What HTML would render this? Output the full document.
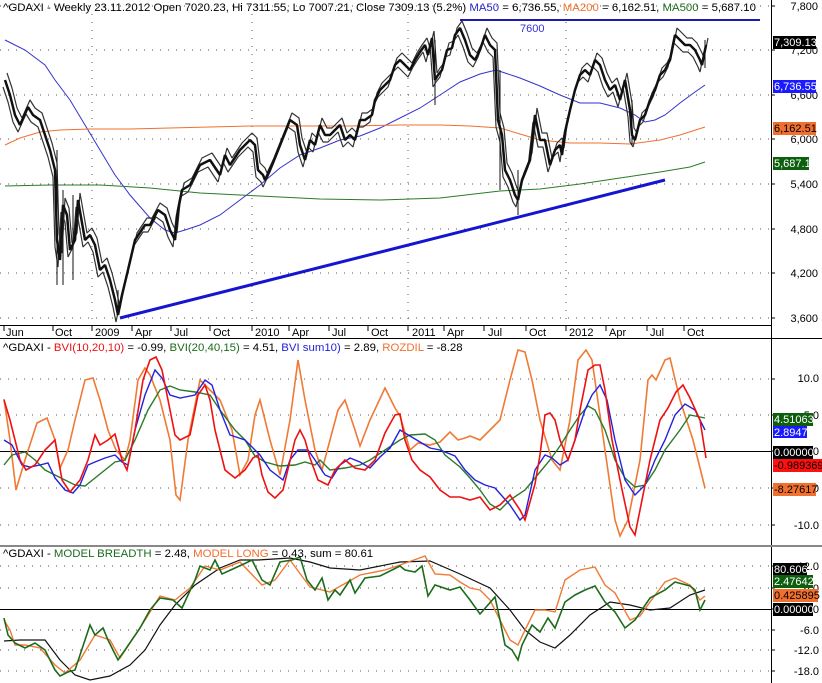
<!DOCTYPE html>
<html><head><meta charset="utf-8"><style>
html,body{margin:0;padding:0;background:#fff;}
svg{display:block;font-family:"Liberation Sans",Arial,sans-serif;font-size:11px;}
.hd{font-size:11.4px;}
</style></head><body>
<svg width="822" height="683" viewBox="0 0 822 683" xmlns="http://www.w3.org/2000/svg">
<rect width="822" height="683" fill="#fff"/>
<g stroke="#555" stroke-width="1" stroke-dasharray="1,7">
<line x1="0" y1="6" x2="771" y2="6"/><line x1="0" y1="50" x2="771" y2="50"/><line x1="0" y1="95" x2="771" y2="95"/><line x1="0" y1="139" x2="771" y2="139"/><line x1="0" y1="184" x2="771" y2="184"/><line x1="0" y1="229" x2="771" y2="229"/><line x1="0" y1="273" x2="771" y2="273"/><line x1="0" y1="318" x2="771" y2="318"/>
<line x1="0" y1="379" x2="771" y2="379"/><line x1="0" y1="415" x2="771" y2="415"/><line x1="0" y1="488" x2="771" y2="488"/><line x1="0" y1="525" x2="771" y2="525"/>
<line x1="0" y1="566" x2="771" y2="566"/><line x1="0" y1="588" x2="771" y2="588"/><line x1="0" y1="630" x2="771" y2="630"/><line x1="0" y1="650" x2="771" y2="650"/><line x1="0" y1="671" x2="771" y2="671"/>
<line x1="92" y1="14" x2="92" y2="325"/><line x1="252" y1="14" x2="252" y2="325"/><line x1="408" y1="14" x2="408" y2="325"/><line x1="566" y1="14" x2="566" y2="325"/>
</g>
<g stroke="#000" stroke-width="1">
<line x1="771" y1="6" x2="775" y2="6"/><line x1="771" y1="50" x2="775" y2="50"/><line x1="771" y1="95" x2="775" y2="95"/><line x1="771" y1="139" x2="775" y2="139"/><line x1="771" y1="184" x2="775" y2="184"/><line x1="771" y1="229" x2="775" y2="229"/><line x1="771" y1="273" x2="775" y2="273"/><line x1="771" y1="318" x2="775" y2="318"/>
</g>
<line x1="771.5" y1="0" x2="771.5" y2="683" stroke="#000"/>
<line x1="0" y1="325.5" x2="771" y2="325.5" stroke="#000"/>
<line x1="0" y1="338.5" x2="822" y2="338.5" stroke="#000"/>
<line x1="0" y1="546" x2="822" y2="546" stroke="#888" stroke-width="2"/>
<line x1="0" y1="451.5" x2="771" y2="451.5" stroke="#000"/>
<line x1="0" y1="609.5" x2="771" y2="609.5" stroke="#000"/>
<g fill="#000">
<text x="6" y="336">Jun</text><text x="55" y="336">Oct</text><text x="95" y="336">2009</text><text x="135" y="336">Apr</text><text x="174" y="336">Jul</text><text x="213" y="336">Oct</text><text x="255" y="336">2010</text><text x="292" y="336">Apr</text><text x="332" y="336">Jul</text><text x="371" y="336">Oct</text><text x="412" y="336">2011</text><text x="447" y="336">Apr</text><text x="488" y="336">Jul</text><text x="529" y="336">Oct</text><text x="569" y="336">2012</text><text x="609" y="336">Apr</text><text x="650" y="336">Jul</text><text x="687" y="336">Oct</text>
</g>
<g stroke="#000"><line x1="4" y1="325" x2="4" y2="331"/><line x1="53" y1="325" x2="53" y2="331"/><line x1="92" y1="325" x2="92" y2="331"/><line x1="132" y1="325" x2="132" y2="331"/><line x1="171" y1="325" x2="171" y2="331"/><line x1="210" y1="325" x2="210" y2="331"/><line x1="252" y1="325" x2="252" y2="331"/><line x1="289" y1="325" x2="289" y2="331"/><line x1="329" y1="325" x2="329" y2="331"/><line x1="368" y1="325" x2="368" y2="331"/><line x1="408" y1="325" x2="408" y2="331"/><line x1="444" y1="325" x2="444" y2="331"/><line x1="484" y1="325" x2="484" y2="331"/><line x1="526" y1="325" x2="526" y2="331"/><line x1="566" y1="325" x2="566" y2="331"/><line x1="606" y1="325" x2="606" y2="331"/><line x1="647" y1="325" x2="647" y2="331"/><line x1="684" y1="325" x2="684" y2="331"/></g>

<polyline fill="none" stroke="#3333cc" stroke-width="1" points="5,40 25,50 45,65 55,80 70,100 85,125 100,150 115,175 130,195 150,218 165,230 175,233 185,230 200,225 220,215 240,200 260,185 280,168 300,155 320,148 340,140 360,136 380,128 400,118 420,108 440,95 460,82 480,74 496,70 520,78 540,86 560,95 580,103 600,103 620,108 635,115 645,122 655,120 665,115 680,103 695,92 705,85"/>
<polyline fill="none" stroke="#f07030" stroke-width="1" points="5,145 20,138 40,132 60,130 90,129 130,129 170,128 210,127 250,126 300,126 350,126 400,125 440,125 470,126 500,128 520,134 540,140 570,143 600,143 630,144 660,140 680,135 705,127"/>
<polyline fill="none" stroke="#2a7a2a" stroke-width="1" points="5,186 50,185 100,185 150,188 200,193 260,196 320,199 380,200 440,198 500,191 540,189 580,184 620,178 660,172 690,167 705,162"/>
<line x1="120" y1="318" x2="665" y2="180" stroke="#1515d0" stroke-width="3"/>
<line x1="460" y1="20" x2="760" y2="20" stroke="#1a1ab0" stroke-width="2"/>
<text x="520" y="32" fill="#3333cc">7600</text>
<defs>
<polyline id="pr" fill="none" stroke-linejoin="bevel" points="5,80 10,95 15,115 20,125 28,107 33,115 40,120 45,135 50,150 55,170 57,240 60,260 63,205 67,215 70,250 75,240 78,200 85,240 90,235 95,245 100,270 105,265 110,280 115,300 118,315 122,295 128,270 135,240 145,225 150,225 158,210 165,215 170,230 175,240 178,210 182,190 190,185 200,165 210,160 220,175 225,155 230,165 240,150 250,140 255,145 258,170 263,175 265,180 272,165 280,145 290,120 297,125 300,145 305,160 310,140 315,145 320,125 325,135 330,135 340,125 345,140 350,135 355,140 360,120 365,120 372,115 375,100 380,90 385,85 390,80 395,65 400,60 405,65 410,70 415,60 420,52 425,45 428,55 432,38 435,80 438,75 442,70 447,50 452,48 455,35 460,28 465,40 470,55 475,60 480,50 485,35 490,45 495,50 498,120 502,135 505,170 510,180 515,195 518,200 522,180 530,160 535,115 540,140 545,140 550,165 555,150 560,145 562,155 565,132 570,110 575,90 580,75 585,70 590,75 595,60 600,65 605,80 610,90 615,85 620,100 625,80 630,110 632,135 635,140 640,120 645,115 650,100 655,90 660,75 665,70 670,60 675,35 680,40 685,45 690,45 695,50 700,60 702,65 706,45"/>
</defs>
<use href="#pr" stroke="#333" stroke-width="1.2" transform="translate(2,-7)"/>
<use href="#pr" stroke="#333" stroke-width="1.2" transform="translate(-2,7)"/>
<use href="#pr" stroke="#111" stroke-width="2.5"/>
<g stroke="#111" stroke-width="1"><line x1="57" y1="150" x2="57" y2="285"/><line x1="63" y1="190" x2="63" y2="285"/><line x1="73" y1="195" x2="73" y2="280"/><line x1="118" y1="290" x2="118" y2="315"/><line x1="500" y1="70" x2="500" y2="190"/><line x1="518" y1="170" x2="518" y2="215"/><line x1="435" y1="40" x2="435" y2="105"/><line x1="632" y1="100" x2="632" y2="145"/><line x1="705" y1="40" x2="705" y2="68"/></g>

<text class="hd" x="3" y="11"><tspan fill="#000">^GDAXI - Weekly 23.11.2012 Open 7020.23, Hi 7311.55, Lo 7007.21, Close 7309.13 (5.2%) </tspan><tspan fill="#2a2acc">MA50</tspan><tspan> = 6,736.55, </tspan><tspan fill="#f07030">MA200</tspan><tspan> = 6,162.51, </tspan><tspan fill="#1d6b1d">MA500</tspan><tspan> = 5,687.10</tspan></text>

<polyline fill="none" stroke="#f07a35" stroke-width="1.6" points="4,399 10,440 16,490 25,460 37,423 47,418 55,440 60,468 68,450 75,420 85,380 93,378 100,400 108,430 116,450 125,460 130,440 138,380 145,368 150,375 160,400 170,440 176,495 180,500 188,440 200,380 210,390 220,400 232,430 240,475 248,460 255,415 260,400 270,440 280,475 290,420 298,360 305,400 315,450 322,470 330,440 338,410 345,400 355,430 360,446 370,420 385,388 395,408 400,416 410,450 418,443 430,445 440,442 450,432 458,440 465,438 470,436 480,440 490,430 500,420 510,380 518,350 525,352 532,380 540,420 552,460 560,470 570,420 578,360 586,350 592,360 605,450 615,520 620,536 628,520 640,460 648,380 652,375 656,380 665,360 670,358 680,400 693,440 705,488"/>
<polyline fill="none" stroke="#2a7a2a" stroke-width="1.4" points="4,465 12,455 25,452 35,460 45,470 55,475 65,480 75,485 85,486 95,478 105,470 115,462 125,460 135,440 148,410 160,390 170,386 180,390 195,392 210,395 220,410 235,430 245,440 255,456 265,462 280,466 295,465 305,462 315,465 320,460 330,470 345,468 360,465 370,460 385,450 400,440 410,435 425,434 435,440 445,455 460,467 470,478 480,490 490,504 500,510 510,500 525,490 535,478 550,460 560,446 570,430 580,415 588,406 595,410 605,430 615,460 625,478 635,487 645,485 655,470 665,450 680,430 690,415 705,418"/>
<polyline fill="none" stroke="#2222dd" stroke-width="1.4" points="4,440 12,445 22,465 30,467 40,465 48,463 55,478 65,490 73,493 80,485 88,465 95,462 105,458 115,455 122,462 128,465 135,430 145,395 155,370 162,378 170,395 180,398 195,395 205,380 212,385 220,410 230,435 245,440 260,455 270,470 283,480 290,460 298,450 308,450 315,460 325,475 332,478 340,465 350,458 360,462 370,468 380,457 390,448 400,430 410,436 420,442 430,448 440,450 455,456 465,470 475,480 485,485 495,488 510,505 520,520 525,515 535,470 545,455 552,458 560,465 568,460 575,440 585,410 592,395 600,385 607,400 615,440 625,480 635,495 645,485 655,460 665,440 675,415 685,404 695,410 705,430"/>
<polyline fill="none" stroke="#ee1111" stroke-width="1.6" points="4,400 10,420 20,460 26,470 35,465 45,450 55,440 62,480 70,492 80,480 88,460 95,435 100,445 108,440 115,434 122,460 127,470 135,430 143,380 150,360 156,357 162,370 168,400 175,435 180,440 190,435 198,395 205,385 210,400 215,430 225,470 235,478 245,470 253,458 258,455 262,475 268,492 275,498 283,490 295,440 300,430 305,440 310,458 318,480 328,485 335,470 345,460 355,468 365,470 375,460 385,433 395,415 400,414 405,440 412,460 420,470 430,477 440,490 450,497 460,497 470,500 480,497 490,510 500,505 510,495 520,510 525,520 535,484 540,455 545,415 550,413 555,420 560,440 568,460 575,440 580,410 588,370 595,365 600,365 605,390 612,440 620,480 630,527 635,535 642,500 650,460 660,420 668,408 676,392 683,385 690,398 700,420 706,458"/>
<text class="hd" x="3" y="351"><tspan>^GDAXI - </tspan><tspan fill="#ee1111">BVI(10,20,10)</tspan><tspan> = -0.99, </tspan><tspan fill="#1d6b1d">BVI(20,40,15)</tspan><tspan>  = 4.51, </tspan><tspan fill="#2222dd">BVI sum10)</tspan><tspan> = 2.89, </tspan><tspan fill="#f07030">ROZDIL</tspan><tspan> = -8.28</tspan></text>

<polyline fill="none" stroke="#111" stroke-width="1.2" points="4,641 20,640 45,640 60,660 75,675 90,680 110,676 130,665 145,650 160,625 175,605 195,585 220,568 240,560 258,560 290,558 310,562 330,568 360,570 400,562 430,561 460,574 490,588 510,610 525,630 540,642 555,648 570,635 590,615 610,602 630,605 650,610 670,608 690,595 705,590"/>
<polyline fill="none" stroke="#f07a35" stroke-width="1.4" points="4,620 10,630 15,645 25,645 40,648 55,665 65,673 80,660 95,635 110,640 120,658 140,628 160,596 175,600 190,588 205,566 220,570 240,562 262,585 275,580 290,560 310,587 330,592 360,575 385,570 400,565 425,556 435,574 450,575 460,582 470,588 480,590 490,600 500,620 510,640 518,645 525,630 535,610 545,610 555,612 565,580 580,570 595,567 605,585 615,593 630,620 640,616 650,602 665,582 675,578 690,585 700,600 705,596"/>
<polyline fill="none" stroke="#1d6b1d" stroke-width="1.6" points="4,618 8,635 15,643 25,648 35,643 45,650 55,670 60,676 68,672 75,670 85,640 90,625 95,635 103,628 108,640 118,660 125,650 140,628 150,610 160,598 173,600 182,608 195,580 200,566 210,570 215,560 222,574 235,568 248,562 252,560 262,580 270,585 280,562 292,560 300,557 307,580 315,590 322,578 328,600 335,590 340,595 350,580 355,593 365,578 380,576 400,566 405,570 415,572 422,566 428,596 435,585 450,590 460,587 470,600 480,614 495,597 500,620 505,645 512,650 518,660 522,645 532,625 540,632 548,618 555,628 565,602 575,595 585,590 595,586 605,602 615,612 625,628 635,620 650,598 665,590 675,582 690,586 695,590 700,610 705,600"/>
<text class="hd" x="3" y="557"><tspan>^GDAXI - </tspan><tspan fill="#1d6b1d">MODEL BREADTH</tspan><tspan> = 2.48, </tspan><tspan fill="#f07030">MODEL LONG</tspan><tspan> = 0.43, sum = 80.61</tspan></text>

<g fill="#000" text-anchor="end">
<text x="818" y="10">7,800</text><text x="818" y="54">7,200</text><text x="818" y="99">6,600</text><text x="818" y="143">6,000</text><text x="818" y="188">5,400</text><text x="818" y="233">4,800</text><text x="818" y="277">4,200</text><text x="818" y="322">3,600</text>
<text x="819" y="382">10.0</text><text x="819" y="419">5.0</text><text x="819" y="455">0.0</text><text x="819" y="492">-5.0</text><text x="819" y="529">-10.0</text>
<text x="819" y="570">12.0</text><text x="819" y="592">6.0</text><text x="819" y="613">0.0</text><text x="819" y="634">-6.0</text><text x="819" y="654">-12.0</text><text x="819" y="675">-18.0</text>
</g>
<g stroke="#000"><line x1="771" y1="379" x2="775" y2="379"/><line x1="771" y1="415" x2="775" y2="415"/><line x1="771" y1="451" x2="775" y2="451"/><line x1="771" y1="488" x2="775" y2="488"/><line x1="771" y1="525" x2="775" y2="525"/><line x1="771" y1="566" x2="775" y2="566"/><line x1="771" y1="588" x2="775" y2="588"/><line x1="771" y1="609" x2="775" y2="609"/><line x1="771" y1="630" x2="775" y2="630"/><line x1="771" y1="650" x2="775" y2="650"/><line x1="771" y1="671" x2="775" y2="671"/></g>
<g font-size="11">
<rect x="773" y="36" width="43" height="13" fill="#000"/><text x="774" y="46" fill="#fff">7,309.13</text>
<rect x="773" y="80" width="43" height="13" fill="#1a1aff"/><text x="774" y="90" fill="#fff">6,736.55</text>
<rect x="773" y="122" width="43" height="13" fill="#f07030"/><text x="774" y="132" fill="#000">6,162.51</text>
<rect x="773" y="157" width="36" height="13" fill="#0d5e0d"/><text x="774" y="167" fill="#fff">5,687.1</text>
<rect x="773" y="413" width="40" height="13" fill="#0d5e0d"/><text x="774" y="423" fill="#fff">4.51063</text>
<rect x="773" y="426" width="34" height="12" fill="#1a1aff"/><text x="774" y="436" fill="#fff">2.8947</text>
<rect x="773" y="446" width="40" height="13" fill="#000"/><text x="774" y="456" fill="#fff">0.00000</text>
<rect x="773" y="459" width="49" height="13" fill="#ff1010"/><text x="774" y="469" fill="#000">-0.989369</text>
<rect x="773" y="483" width="43" height="13" fill="#f07030"/><text x="774" y="493" fill="#000">-8.27617</text>
<rect x="773" y="563" width="34" height="12" fill="#000"/><text x="774" y="573" fill="#fff">80.606</text>
<rect x="773" y="575" width="40" height="13" fill="#0d5e0d"/><text x="774" y="585" fill="#fff">2.47642</text>
<rect x="773" y="589" width="45" height="13" fill="#f07030"/><text x="774" y="599" fill="#000">0.425895</text>
<rect x="773" y="603" width="40" height="13" fill="#000"/><text x="774" y="613" fill="#fff">0.00000</text>
</g>
</svg>
</body></html>
